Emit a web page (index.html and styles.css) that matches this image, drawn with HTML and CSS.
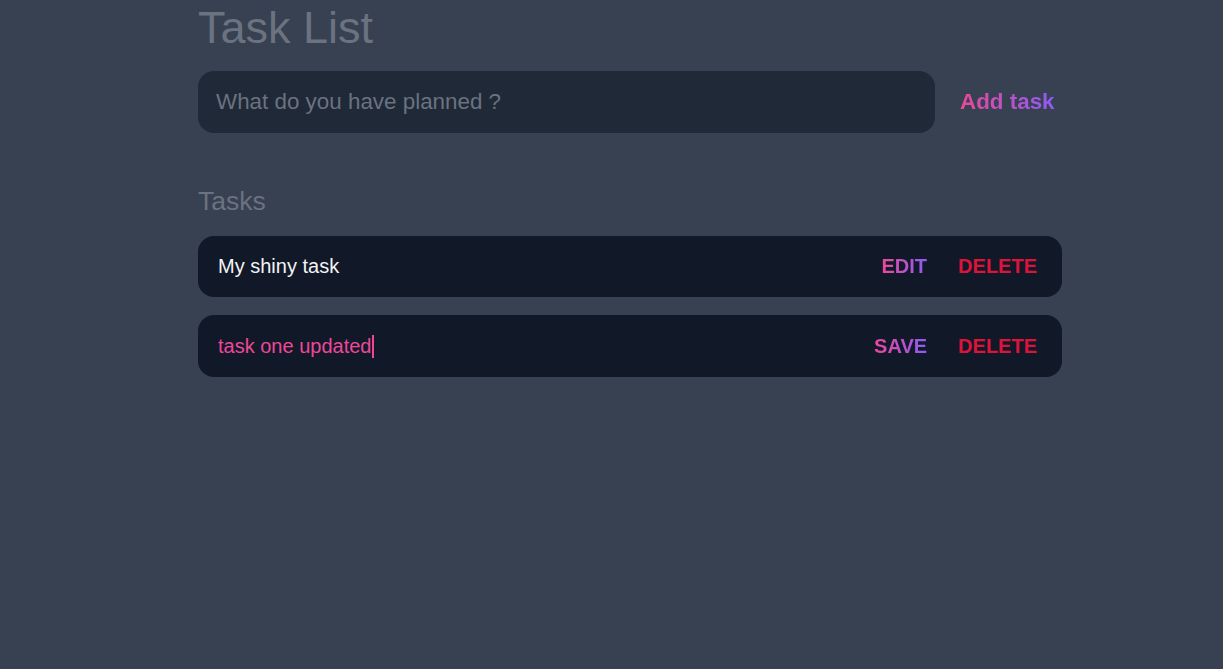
FILE: index.html
```html
<!DOCTYPE html>
<html lang="en">
<head>
<meta charset="utf-8">
<title>Task List</title>
<link rel="stylesheet" href="styles.css">
</head>
<body>
<main class="app">
  <h1 class="title">Task List</h1>
  <form class="new-task" onsubmit="return false">
    <input class="new-task-input" type="text" placeholder="What do you have planned ?">
    <button class="add-btn" type="submit"><span class="grad">Add task</span></button>
  </form>
  <section class="tasks">
    <h2 class="tasks-title">Tasks</h2>
    <div class="task">
      <div class="task-text">My shiny task</div>
      <div class="actions">
        <button class="act edit"><span class="grad">EDIT</span></button>
        <button class="act delete">DELETE</button>
      </div>
    </div>
    <div class="task">
      <div class="task-text editing">task one updated<span class="caret"></span></div>
      <div class="actions">
        <button class="act edit"><span class="grad">SAVE</span></button>
        <button class="act delete">DELETE</button>
      </div>
    </div>
  </section>
</main>
</body>
</html>
```

FILE: styles.css
```css
* { box-sizing: border-box; }
html, body {
  margin: 0;
  padding: 0;
  background: #374151;
  font-family: "Liberation Sans", Arial, sans-serif;
  height: 100%;
}
.app {
  width: 864px;
  margin: 0 0 0 198px;
  padding-top: 3px;
}
.title {
  margin: 0;
  font-size: 45px;
  font-weight: 400;
  color: #6b7280;
  line-height: 50px;
}
.new-task {
  display: flex;
  align-items: center;
  margin-top: 18px;
}
.new-task-input {
  width: 737px;
  height: 62px;
  border: none;
  outline: none;
  border-radius: 16px;
  background: #1f2937;
  padding: 0 18px;
  font-family: inherit;
  font-size: 22.4px;
  color: #d1d5db;
}
.new-task-input::placeholder { color: #6b7280; }
.add-btn {
  background: none;
  border: none;
  padding: 0;
  margin-left: 25px;
  font-family: inherit;
  font-size: 22.4px;
  font-weight: 700;
  cursor: pointer;
}
.grad {
  background: linear-gradient(90deg, #ec4899, #8b5cf6);
  -webkit-background-clip: text;
  background-clip: text;
  color: transparent;
}
.tasks { margin-top: 53px; }
.tasks-title {
  margin: 0 0 20px;
  font-size: 26.5px;
  font-weight: 400;
  color: #6b7280;
  line-height: 30px;
}
.task {
  display: flex;
  align-items: center;
  justify-content: space-between;
  height: 61px;
  background: #111827;
  border-radius: 16px;
  padding: 0 25px 0 20px;
  margin-bottom: 18px;
}
.task + .task { height: 62px; }
.task-text {
  font-size: 20px;
  color: #f3f4f6;
  display: flex;
  align-items: center;
}
.task-text.editing { color: #ec4899; }
.caret {
  display: inline-block;
  width: 2px;
  height: 23px;
  background: #ec4899;
  margin-left: 1px;
}
.actions {
  display: flex;
  align-items: center;
  gap: 31px;
}
.act {
  background: none;
  border: none;
  padding: 0;
  font-family: inherit;
  font-size: 20px;
  font-weight: 700;
  cursor: pointer;
}
.delete { color: #dc143c; }
```
